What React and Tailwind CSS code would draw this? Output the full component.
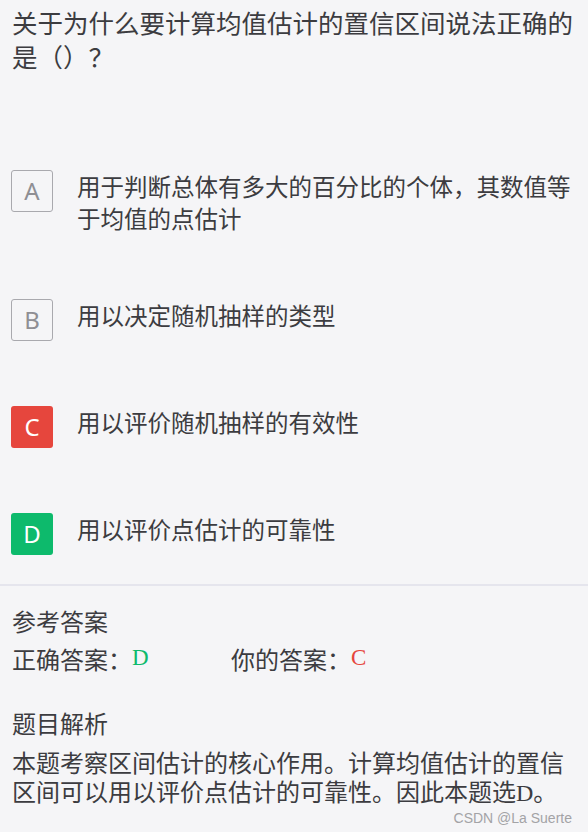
import React from 'react';

const options = [
  { key: 'A', text: '用于判断总体有多大的百分比的个体，其数值等于均值的点估计', state: 'normal' },
  { key: 'B', text: '用以决定随机抽样的类型', state: 'normal' },
  { key: 'C', text: '用以评价随机抽样的有效性', state: 'wrong' },
  { key: 'D', text: '用以评价点估计的可靠性', state: 'right' },
];

const cjk = { fontFamily: '"Noto Sans CJK SC", "Noto Sans", sans-serif' };
const serif = { fontFamily: '"Liberation Serif", serif' };

function OptionBadge({ letter, state }) {
  const base = 'w-[42px] h-[42px] shrink-0 rounded-[3px] flex items-center justify-center text-[24px] leading-none font-["Noto_Sans",sans-serif]';
  if (state === 'wrong') return <div className={`${base} bg-[#e6463d] text-white`}>{letter}</div>;
  if (state === 'right') return <div className={`${base} bg-[#0dba6c] text-white`}>{letter}</div>;
  return <div className={`${base} border border-[#a9a9ae] text-[#8f8f94]`}>{letter}</div>;
}

export default function App() {
  return (
    <div className="w-[588px] h-[832px] bg-[#f5f5f7] text-[#3c3c40] overflow-hidden relative" style={cjk}>
      {/* Question */}
      <div className="pl-[12px] pr-[12px] pt-[5px] text-[25.5px] leading-[34px]">
        关于为什么要计算均值估计的置信区间说法正确的是（）？
      </div>

      {/* Options */}
      <div className="mt-[97px] flex flex-col gap-[65px] pl-[11px] pr-[10px]">
        {options.map((o) => (
          <div key={o.key} className="flex items-start">
            <OptionBadge letter={o.key} state={o.state} />
            <div className="ml-[24px] text-[23.5px] leading-[32px]">{o.text}</div>
          </div>
        ))}
      </div>

      <div className="mt-[29px] h-[2px] bg-[#e5e5ed]" />

      {/* Answer */}
      <div className="px-[12px] pt-[16px] text-[24px] leading-[37px]">
        <div>参考答案</div>
        <div className="flex">
          <div className="w-[219px]">
            正确答案：
            <span className="text-[#0dba6c] text-[23px] align-[4px]" style={serif}>D</span>
          </div>
          <div>
            你的答案：
            <span className="text-[#e6463d] text-[23px] align-[4px]" style={serif}>C</span>
          </div>
        </div>

        <div className="mt-[27px]">题目解析</div>
        <div className="mt-[6px] leading-[29px] pr-[2px]">
          本题考察区间估计的核心作用。计算均值估计的置信区间可以用以评价点估计的可靠性。因此本题选<span style={serif}>D</span>。
        </div>
      </div>

      {/* watermark */}
      <div className="absolute right-[16px] bottom-[6px] text-[14px] leading-[16px] text-[#a3a3a6] font-['Liberation_Sans',sans-serif]">
        CSDN @La Suerte
      </div>
    </div>
  );
}
